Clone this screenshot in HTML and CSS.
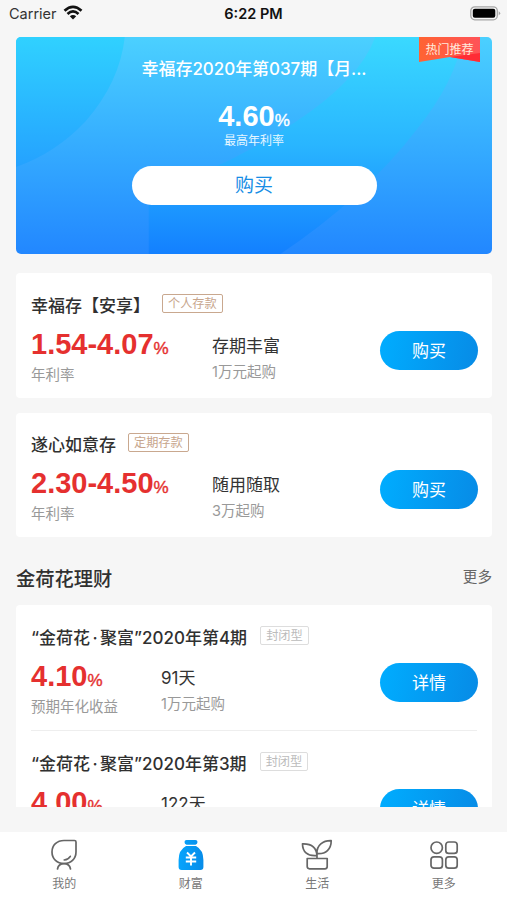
FILE: index.html
```html
<!DOCTYPE html>
<html lang="zh-CN">
<head>
<meta charset="utf-8">
<title>财富</title>
<link rel="stylesheet" href="styles.css">
</head>
<body>
<div class="screen">
  <header class="status">
    <div class="carrier"><span>Carrier</span>
      <svg width="20" height="15" viewBox="0 0 20 15" fill="none" stroke="#111" stroke-width="2.7"><path d="M1.5 5.8Q10-2 18.5 5.8M4.5 9Q10 3.8 15.5 9"/><path d="M10 14.5 6.8 11.2Q10 8.6 13.2 11.2Z" fill="#111" stroke="none"/></svg>
    </div>
    <div class="time">6:22 PM</div>
    <svg class="battery" width="31" height="15" viewBox="0 0 31 15"><rect x=".8" y=".8" width="26.5" height="13" rx="4" fill="#f7f7f7" stroke="#a5a5a5" stroke-width="1.3"/><rect x="2.8" y="2.8" width="22.5" height="9" rx="2" fill="#000"/><path d="M28.7 5.2q3 2.1 0 4.2Z" fill="#a5a5a5"/></svg>
  </header>

  <main class="content">
    <section class="hero">
      <svg class="hero-bg" viewBox="0 0 477 217" preserveAspectRatio="none">
        <defs>
          <linearGradient id="base" x2="0" y2="217" gradientUnits="userSpaceOnUse"><stop stop-color="#4bd0ff"/><stop offset=".45" stop-color="#37b0ff"/><stop offset="1" stop-color="#2287ff"/></linearGradient>
          <linearGradient id="band" x2="0" y2="217" gradientUnits="userSpaceOnUse"><stop stop-color="#3ad9ff"/><stop offset=".5" stop-color="#29b5ff"/><stop offset="1" stop-color="#1380ff"/></linearGradient>
          <linearGradient id="corner" x2="0" y2="135" gradientUnits="userSpaceOnUse"><stop stop-color="#30d1ff"/><stop offset="1" stop-color="#24a0ff"/></linearGradient>
        </defs>
        <rect width="477" height="217" fill="url(#base)"/>
        <path d="M360 0H448Q440 45 402 92Q350 160 265 217H133V155Q210 132 280 85Q345 42 360 0Z" fill="url(#band)"/>
        <path d="M0 0H109Q104 45 70 84Q40 116 0 130Z" fill="url(#corner)"/>
      </svg>
      <div class="ribbon">热门推荐
        <svg viewBox="0 0 61 26" preserveAspectRatio="none"><defs><linearGradient id="red"><stop stop-color="#ff6332"/><stop offset="1" stop-color="#ff5358"/></linearGradient></defs><path d="M0 0H61V25L31 20 0 25Z" fill="url(#red)"/><path d="M61 16V25L31 20Z" fill="#ff2c35"/></svg>
      </div>
      <h1>幸福存2020年第037期【月...</h1>
      <div class="rate hero-rate">4.60<small>%</small></div>
      <p class="hero-label">最高年利率</p>
      <button class="hero-buy">购买</button>
    </section>

    <section class="card">
      <div class="heading"><h2>幸福存【安享】</h2><span class="tag">个人存款</span></div>
      <div class="row">
        <div class="yield"><div class="rate">1.54-4.07<small>%</small></div><p>年利率</p></div>
        <div class="info"><b>存期丰富</b><p>1万元起购</p></div>
        <button class="buy">购买</button>
      </div>
    </section>

    <section class="card second">
      <div class="heading"><h2>遂心如意存</h2><span class="tag">定期存款</span></div>
      <div class="row">
        <div class="yield"><div class="rate">2.30-4.50<small>%</small></div><p>年利率</p></div>
        <div class="info"><b>随用随取</b><p>3万起购</p></div>
        <button class="buy">购买</button>
      </div>
    </section>

    <div class="section-title"><h3>金荷花理财</h3><a>更多</a></div>

    <section class="list">
      <article class="item">
        <div class="heading"><h2>“金荷花<i>·</i>聚富”2020年第4期</h2><span class="tag gray">封闭型</span></div>
        <div class="row narrow">
          <div class="yield"><div class="rate">4.10<small>%</small></div><p>预期年化收益</p></div>
          <div class="info"><b>91天</b><p>1万元起购</p></div>
          <button class="buy">详情</button>
        </div>
      </article>
      <article class="item">
        <div class="heading"><h2>“金荷花<i>·</i>聚富”2020年第3期</h2><span class="tag gray">封闭型</span></div>
        <div class="row narrow">
          <div class="yield"><div class="rate">4.00<small>%</small></div></div>
          <div class="info"><b>122天</b></div>
          <button class="buy">详情</button>
        </div>
      </article>
    </section>
  </main>

  <nav class="tabs">
    <a><svg width="32" height="32" viewBox="0 0 32 32" fill="none" stroke="#666" stroke-width="1.7" stroke-linecap="round" stroke-linejoin="round"><path d="M16 1.5H26.5Q28 1.5 28 3V13C28 20 22.8 24.5 16 24.5S4 20 4 13 9 1.5 16 1.5Z"/><path d="M16.2 21Q20.5 20.5 22.3 17.3M9.5 30Q10.5 24.7 16 24.7T22.5 30"/></svg><span>我的</span></a>
    <a><svg width="32" height="32" viewBox="0 0 32 32"><defs><linearGradient id="bag"><stop stop-color="#06a4fc"/><stop offset="1" stop-color="#078ce9"/></linearGradient></defs><path d="M11.5 1H20.5Q22.5 1 22.5 3T20.5 5.7H11.5Q9.5 5 9.5 3T11.5 1ZM11 7H21Q28.4 11 28.4 21V28Q28.4 31 25.4 31H6.6Q3.6 31 3.6 28V21Q3.6 11 11 7Z" fill="url(#bag)"/><path d="M12 13.5 16 17.5 20 13.5M10.8 18.5H21.2M10.8 22.5H21.2M16 17.5V26.5" fill="none" stroke="#fff" stroke-width="1.9"/></svg><span>财富</span></a>
    <a><svg width="32" height="32" viewBox="0 0 32 32" fill="none" stroke="#666" stroke-width="1.7" stroke-linejoin="round"><path d="M16 16.5C15.5 8.5 10 4.5 1.5 4.8 1.5 12.5 6 17.5 16 16.5ZM16 14.5C15.5 6 22 1.5 30.2 1.7 30.2 10 25 15.3 16 14.5ZM16 14V19.5M6.2 19.5H26.2V27.5Q26.2 29.8 24 29.8H8.5Q6.2 29.8 6.2 27.5Z"/></svg><span>生活</span></a>
    <a><svg width="32" height="32" viewBox="0 0 32 32" fill="none" stroke="#666" stroke-width="1.7"><circle cx="8.7" cy="8.7" r="5.7"/><rect x="17.8" y="3" width="11.4" height="11.4" rx="3"/><rect x="3" y="17.8" width="11.4" height="11.4" rx="3"/><rect x="17.8" y="17.8" width="11.4" height="11.4" rx="3"/></svg><span>更多</span></a>
  </nav>
</div>
</body>
</html>
```

FILE: styles.css
```css
* { box-sizing: border-box; margin: 0; padding: 0; }
body { background: #f6f6f6; font-family: Inter, "Noto Sans CJK SC", sans-serif; color: #333; }
.screen { width: 507px; height: 900px; display: flex; flex-direction: column; overflow: hidden; }
button { border: 0; font-family: inherit; }

.status { height: 36.5px; padding: 0 6px 9px 9px; display: grid; grid-template-columns: 1fr auto 1fr; align-items: center; flex: none; }
.carrier { display: flex; align-items: center; gap: 6px; font-size: 14.5px; color: #333; }
.carrier svg { margin-top: -3px; }
.time { font-size: 14.5px; font-weight: 600; color: #111; margin-left: -3px; }
.battery { justify-self: end; margin-top: -1px; }

.content { height: 771px; padding: 0 15px 0 16px; flex: none; display: flex; flex-direction: column; overflow: hidden; }
.hero { position: relative; height: 217px; flex: none; border-radius: 5px; overflow: hidden; display: flex; flex-direction: column; align-items: center; color: #fff; padding-top: 19px; }
.hero-bg { position: absolute; inset: 0; width: 100%; height: 100%; }
.hero > h1, .hero-rate, .hero-label, .hero-buy { position: relative; }
.hero h1 { font-size: 17px; line-height: 26px; font-weight: 500; letter-spacing: -.05px; }
.ribbon { position: absolute; right: 12px; top: 0; width: 61px; height: 26px; text-align: center; font-size: 12px; line-height: 26px; color: #ffe9dc; z-index: 1; }
.ribbon svg { position: absolute; inset: 0; width: 61px; height: 26px; z-index: -1; }
.rate { font-family: "Liberation Sans", sans-serif; font-size: 29px; line-height: 34px; font-weight: 700; color: #e5302f; white-space: nowrap; }
.rate small { font-size: 17px; font-weight: 400; -webkit-text-stroke: .4px currentColor; }
.hero-rate { color: #fff; margin-top: 17px; }
.hero-label { font-size: 12px; line-height: 18px; margin-top: -6px; color: #e7f7ff; }
.hero-buy { width: 245px; height: 39px; border-radius: 20px; background: #fff; color: #168de5; font-size: 19px; line-height: 39px; margin-top: 16px; }

.card { height: 125px; flex: none; margin-top: 19.5px; background: #fff; border-radius: 4px; padding: 18px 15px 0; }
.card.second { margin-top: 15px; height: 124px; padding-top: 17px; }
.heading { display: flex; align-items: center; height: 26px; }
h2 { font-size: 17px; font-weight: 500; white-space: nowrap; color: #303030; }
h2 i { font-style: normal; display: inline-block; width: 10px; text-align: center; }
.tag { height: 19px; border: 1.3px solid #c9a88f; border-radius: 2px; font-size: 12.2px; line-height: 18px; color: #c7a58c; padding: 0 5px; margin: -2px 0 0 12px; }
.tag.gray { border-color: #ddd; color: #bbb; margin-left: 13px; }
.row { display: grid; grid-template-columns: 181px 1fr 98px; margin-right: -1px; }
.row.narrow { grid-template-columns: 130px 1fr 98px; }
.yield { padding-top: 10px; }
.row p { font-size: 14.5px; line-height: 22px; color: #999; white-space: nowrap; }
.yield p { margin-top: -2px; }
.info { padding-top: 17px; }
.info b { display: block; font-weight: 400; font-size: 17px; line-height: 25px; }
.info p { margin-top: 2px; }
.buy { width: 98px; height: 39px; margin-top: 14px; padding-top: 1px; border-radius: 20px; background: linear-gradient(100deg, #00adff, #078be6); color: #fff; font-size: 17px; line-height: 38px; }

.section-title { height: 68px; flex: none; display: flex; align-items: center; justify-content: space-between; padding-top: 13px; }
h3 { font-size: 19.3px; font-weight: 500; color: #303030; }
.section-title a { font-size: 14.6px; color: #666; margin-top: -4px; }
.list { height: 202px; flex: none; background: #fff; border-radius: 4px 4px 0 0; padding: 0 15px; overflow: hidden; }
.item { padding-top: 18px; height: 126px; }
.item:first-child { border-bottom: 1px solid #eee; }

.tabs { flex: 1; margin-top: 24px; background: #fff; display: grid; grid-template-columns: repeat(4, 1fr); padding-left: 1px; }
.tabs a { display: flex; flex-direction: column; align-items: center; padding-top: 7px; font-size: 12px; color: #777; }
.tabs span { line-height: 18px; margin-top: 4px; }
```
